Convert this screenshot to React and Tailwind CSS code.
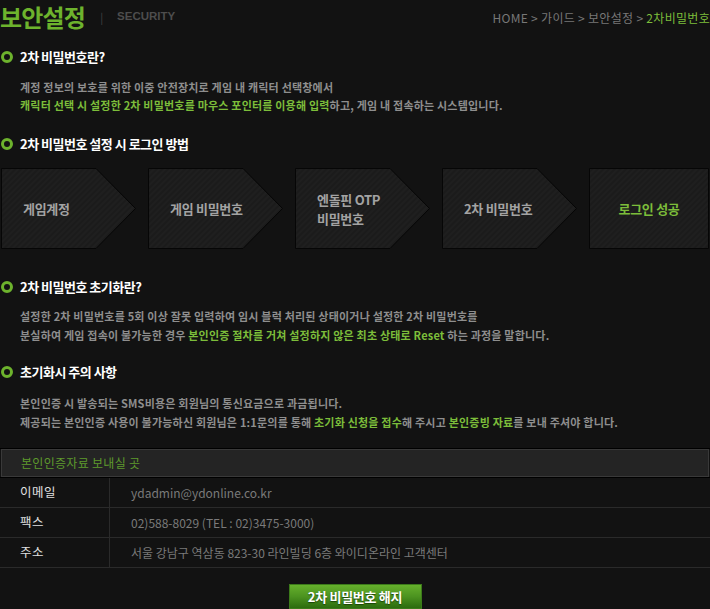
import React from "react";

const KR = "font-['Noto_Sans_CJK_KR','Noto_Sans',sans-serif]";
const G = "text-[#7cbd3a]";

function Bullet() {
  return (
    <span className="inline-block w-[12px] h-[12px] rounded-full border-[3px] border-[#6db32d] bg-[#121212] shrink-0" />
  );
}

function Heading({ children, className = "" }) {
  return (
    <div className={`flex items-center h-[18px] gap-[7px] pl-[1px] ${className}`}>
      <Bullet />
      <h2 className="text-[13px] font-bold text-white tracking-[-0.5px] leading-[18px]">{children}</h2>
    </div>
  );
}

function Para({ children, className = "" }) {
  return (
    <div className={`pl-[20px] text-[11px] font-bold text-[#8e8e8e] tracking-[0.2px] ${className}`}>
      {children}
    </div>
  );
}

function Stripes({ id }) {
  return (
    <defs>
      <pattern id={id} width="4" height="4" patternUnits="userSpaceOnUse" patternTransform="rotate(45)">
        <rect width="4" height="4" fill="#1b1b1b" />
        <rect width="2" height="4" fill="#1f1f1f" />
      </pattern>
    </defs>
  );
}

function Arrow({ id, children, last = false }) {
  const w = last ? 120 : 135;
  const pts = last
    ? "0.5,0.5 119.5,0.5 119.5,80.5 0.5,80.5"
    : "0.5,0.5 95,0.5 134.5,40.5 95,80.5 0.5,80.5";
  return (
    <div className={`relative h-[81px] shrink-0 ${last ? "w-[120px]" : "w-[135px]"}`}>
      <svg className="absolute inset-0" width={w} height="81" viewBox={`0 0 ${w} 81`}>
        <Stripes id={id} />
        <polygon points={pts} fill={`url(#${id})`} stroke="#060606" strokeWidth="1" />
      </svg>
      <div
        className={`relative h-full flex items-center text-[13px] font-bold leading-[19px] tracking-[-0.3px] ${
          last ? "justify-center text-[#7cbd3a]" : "pl-[22px] text-[#a3a3a3]"
        }`}
      >
        {children}
      </div>
    </div>
  );
}

export default function App() {
  return (
    <div className={`w-[710px] h-[609px] bg-[#121212] overflow-hidden ${KR}`}>
      {/* Title row */}
      <div className="h-[34px] flex items-center justify-between">
        <div className="flex items-center">
          <h1 className="text-[24px] font-bold text-[#6db32d] tracking-[-0.8px] leading-[32px]">보안설정</h1>
          <span className="ml-[15px] text-[11px] text-[#444]">|</span>
          <span className="ml-[14px] text-[11.5px] font-bold text-[#4d4d4d] font-['Liberation_Sans',sans-serif]">
            SECURITY
          </span>
        </div>
        <div className="text-[12px] text-[#777] whitespace-nowrap mt-[2px] tracking-[0.3px]">
          HOME &gt; 가이드 &gt; 보안설정 &gt; <span className="text-[#7cbd3a]">2차비밀번호</span>
        </div>
      </div>

      <Heading className="mt-[14px]">2차 비밀번호란?</Heading>
      <Para className="mt-[12px] leading-[18px]">
        <div>계정 정보의 보호를 위한 이중 안전장치로 게임 내 캐릭터 선택창에서</div>
        <div>
          <span className={G}>캐릭터 선택 시 설정한 2차 비밀번호를 마우스 포인터를 이용해 입력</span>하고, 게임 내
          접속하는 시스템입니다.
        </div>
      </Para>

      <Heading className="mt-[21px]">2차 비밀번호 설정 시 로그인 방법</Heading>
      <div className="mt-[15px] pl-[1px] flex gap-[12px]">
        <Arrow id="p1">게임계정</Arrow>
        <Arrow id="p2">게임 비밀번호</Arrow>
        <Arrow id="p3">
          <div>
            엔돌핀 OTP
            <br />
            비밀번호
          </div>
        </Arrow>
        <Arrow id="p4">2차 비밀번호</Arrow>
        <Arrow id="p5" last>
          로그인 성공
        </Arrow>
      </div>

      <Heading className="mt-[29px]">2차 비밀번호 초기화란?</Heading>
      <Para className="mt-[11px] leading-[19px]">
        <div>설정한 2차 비밀번호를 5회 이상 잘못 입력하여 임시 블럭 처리된 상태이거나 설정한 2차 비밀번호를</div>
        <div>
          분실하여 게임 접속이 불가능한 경우{" "}
          <span className={G}>본인인증 절차를 거쳐 설정하지 않은 최초 상태로 Reset</span> 하는 과정을 말합니다.
        </div>
      </Para>

      <Heading className="mt-[18px]">초기화시 주의 사항</Heading>
      <Para className="mt-[13px] leading-[19px]">
        <div>본인인증 시 발송되는 SMS비용은 회원님의 통신요금으로 과금됩니다.</div>
        <div>
          제공되는 본인인증 사용이 불가능하신 회원님은 1:1문의를 통해 <span className={G}>초기화 신청을 접수</span>해
          주시고 <span className={G}>본인증빙 자료</span>를 보내 주셔야 합니다.
        </div>
      </Para>

      {/* Table */}
      <div className="mt-[16px]">
        <div className="border-t border-b border-black">
          <div className="ml-[1px] mr-[1px] h-[28px] bg-[#242424] border border-[#393939] flex items-center pl-[19px] text-[12px] text-[#5e9a2c] tracking-[0.3px]">
            본인인증자료 보내실 곳
          </div>
        </div>
        {[
          ["이메일", "ydadmin@ydonline.co.kr"],
          ["팩스", "02)588-8029 (TEL : 02)3475-3000)"],
          ["주소", "서울 강남구 역삼동 823-30 라인빌딩 6층 와이디온라인 고객센터"],
        ].map(([k, v]) => (
          <div key={k} className="flex h-[30px] border-b border-[#2a2a2a]">
            <div className="w-[110px] border-r border-[#2a2a2a] flex items-center pl-[20px] text-[12.5px] text-[#e0e0e0] tracking-[0.5px]">
              {k}
            </div>
            <div className="flex items-center pl-[21px] text-[12px] text-[#7a7a7a]">{v}</div>
          </div>
        ))}
      </div>

      <div className="mt-[16px] flex justify-center">
        <button className="w-[133px] h-[25px] border border-[#3c7a1a] bg-gradient-to-b from-[#66b02c] via-[#4c9320] to-[#2c6c0e] text-white text-[13px] font-bold tracking-[-0.3px] [text-shadow:0_1px_1px_#1b4406]">
          2차 비밀번호 해지
        </button>
      </div>
    </div>
  );
}
